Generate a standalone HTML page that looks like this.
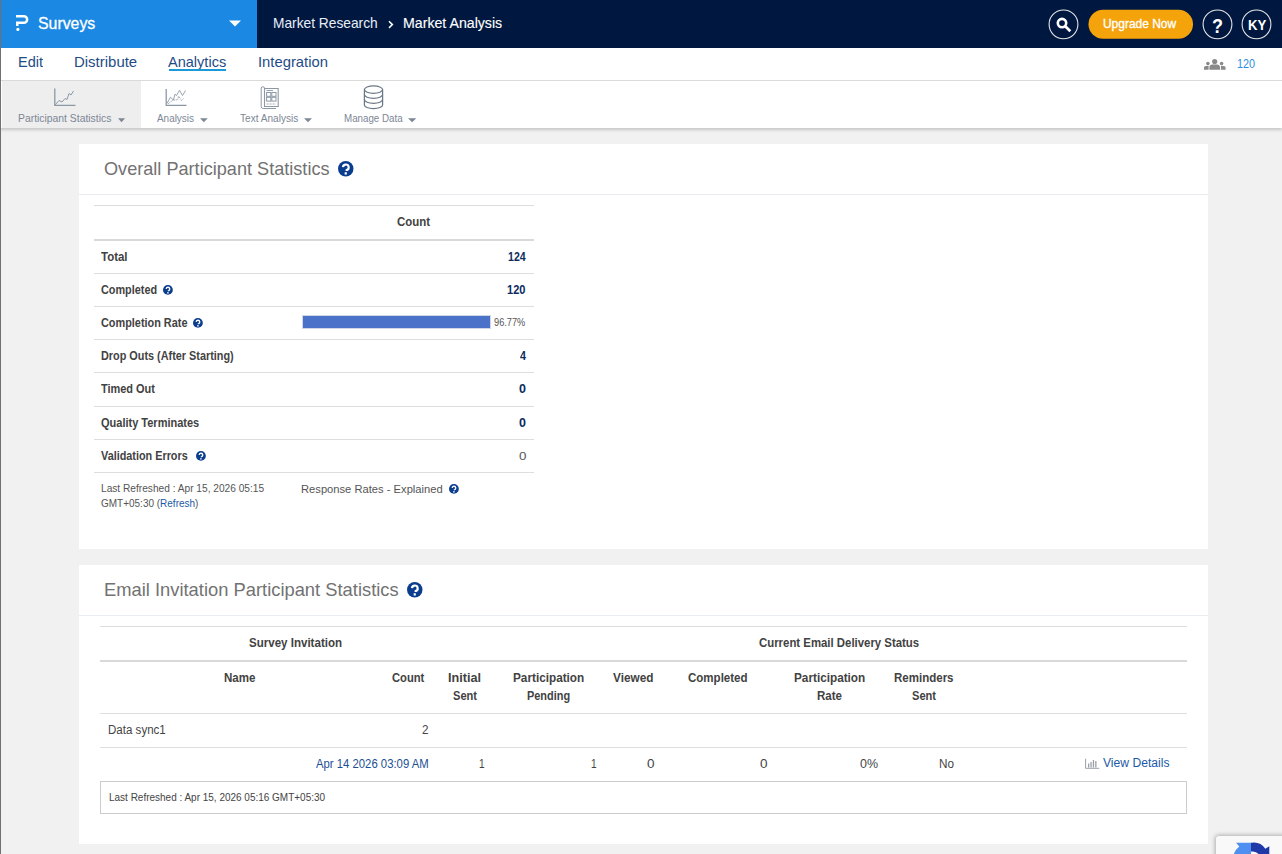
<!DOCTYPE html><html><head><meta charset="utf-8"><style>
html,body{margin:0;padding:0;width:1282px;height:854px;overflow:hidden;font-family:"Liberation Sans",sans-serif}
.t{position:absolute;white-space:nowrap;transform-origin:0 0}
</style></head><body>
<div style="position:absolute;left:0px;top:0px;width:1282px;height:854px;background:#f1f1f1"></div>
<div style="position:absolute;left:0px;top:0px;width:1282px;height:48px;background:#001840"></div>
<div style="position:absolute;left:0px;top:0px;width:257px;height:48px;background:#1b88e3"></div>
<svg style="position:absolute;left:0;top:0" width="40" height="40" viewBox="0 0 40 40">
<path d="M16 16.25 H23.85 A3.3 3.3 0 0 1 23.85 22.85 H17.25 V26.1" fill="none" stroke="#fff" stroke-width="2.5"/>
<circle cx="17.9" cy="29.4" r="1.6" fill="#fff"/></svg>
<div class="t" id="t0" style="left:38.20px;top:15.85px;font-size:16px;line-height:16px;color:#fff;transform:scaleX(0.9908);-webkit-text-stroke:0.3px #fff;">Surveys</div>
<svg style="position:absolute;left:229px;top:20px" width="13" height="7"><path d="M0 0.5 H12 L6 6.5Z" fill="#fff"/></svg>
<div class="t" id="t1" style="left:272.77px;top:16.43px;font-size:14.5px;line-height:14.5px;color:#e8eef8;transform:scaleX(0.9481);">Market Research</div>
<svg style="position:absolute;left:386px;top:17px" width="10" height="14"><path d="M3 4.3 L6.4 7.6 L3 10.9" fill="none" stroke="#fff" stroke-width="1.5"/></svg>
<div class="t" id="t2" style="left:403.27px;top:16.43px;font-size:14.5px;line-height:14.5px;color:#ffffff;transform:scaleX(0.9766);-webkit-text-stroke:0.12px #fff;">Market Analysis</div>
<svg style="position:absolute;left:1040px;top:0" width="240" height="48">
<circle cx="23.5" cy="24.35" r="14.4" fill="none" stroke="#e6e6e6" stroke-width="1.1"/>
<circle cx="22" cy="23.1" r="4.2" fill="none" stroke="#fff" stroke-width="2.6"/>
<path d="M25.5 26.6 L30.3 31.3" stroke="#fff" stroke-width="2.8" stroke-linecap="butt"/>
<rect x="48.5" y="9.8" width="104.5" height="29" rx="14.5" fill="#f4a30b"/>
<circle cx="177.5" cy="24.35" r="14.4" fill="none" stroke="#e6e6e6" stroke-width="1.1"/>
<circle cx="216.5" cy="24.35" r="14.4" fill="none" stroke="#e6e6e6" stroke-width="1.1"/>
</svg>
<div class="t" id="t3" style="left:1103.35px;top:17.20px;font-size:13px;line-height:13px;color:#fff;transform:scaleX(0.9186);-webkit-text-stroke:0.35px #fff;">Upgrade Now</div>
<div class="t" id="t4" style="left:1211.65px;top:15.20px;font-size:21px;line-height:21px;color:#fff;font-weight:bold;transform:scaleX(0.8559);">?</div>
<div class="t" id="t5" style="left:1247.50px;top:18.35px;font-size:14px;line-height:14px;color:#fff;font-weight:bold;transform:scaleX(0.9418);">KY</div>
<div style="position:absolute;left:0px;top:48px;width:1282px;height:33px;background:#fff;border-bottom:1px solid #dcdcdc;box-sizing:border-box"></div>
<div class="t" id="t6" style="left:17.97px;top:54.92px;font-size:14.5px;line-height:14.5px;color:#1f4c86;transform:scaleX(0.9990);">Edit</div>
<div class="t" id="t7" style="left:74.28px;top:54.92px;font-size:14.5px;line-height:14.5px;color:#1f4c86;transform:scaleX(1.0314);">Distribute</div>
<div class="t" id="t8" style="left:168.28px;top:54.92px;font-size:14.5px;line-height:14.5px;color:#1f4c86;transform:scaleX(1.0025);">Analytics</div>
<div style="position:absolute;left:169px;top:69px;width:57px;height:2px;background:#1c9ad8"></div>
<div class="t" id="t9" style="left:257.97px;top:54.92px;font-size:14.5px;line-height:14.5px;color:#1f4c86;transform:scaleX(1.0211);">Integration</div>
<svg style="position:absolute;left:1200px;top:55px" width="30" height="18" viewBox="1200 55 30 18" fill="#8a8a8a">
<circle cx="1214.7" cy="61.6" r="2.6"/>
<path d="M1209.4 69.8 V67.4 A3 3 0 0 1 1212.4 64.6 H1217 A3 3 0 0 1 1220 67.4 V69.8Z"/>
<circle cx="1207.9" cy="63.6" r="1.8"/>
<circle cx="1221.6" cy="63.6" r="1.8"/>
<path d="M1204 69.8 V67.6 A1.8 1.8 0 0 1 1205.8 65.9 H1208.6 V69.8Z"/>
<path d="M1225.6 69.8 V67.6 A1.8 1.8 0 0 0 1223.8 65.9 H1220.9 V69.8Z"/>
</svg>
<div class="t" id="t10" style="left:1237.35px;top:57.20px;font-size:13px;line-height:13px;color:#2a8ee3;transform:scaleX(0.8312);">120</div>
<div style="position:absolute;left:0px;top:81px;width:1282px;height:47px;background:#fff;box-shadow:0 2px 3px rgba(0,0,0,0.18)"></div>
<div style="position:absolute;left:2px;top:81px;width:139px;height:47px;background:#eeeeee"></div>
<svg style="position:absolute;left:0;top:80px" width="430" height="32" viewBox="0 80 430 32" fill="none" stroke="#8d98a5">
<path d="M54.8 88.5 V105.3 H75.5" stroke-width="1.3"/>
<path d="M55 105 L59 100.5 L62 102 L65 98.5 L67 99.5 L69 93.5 L71 95 L73.5 91" stroke-width="1"/>
<path d="M166.2 88.9 V105.3 H186.5" stroke-width="1.3"/>
<path d="M167 103.5 L170.4 97.2 L173.4 100 L175 94.2 L176.5 95.5 L179.5 90.2 L182.5 95.5 L185.5 90.5" stroke-width="0.9"/>
<path d="M168 103.8 L173 100 L177.7 99.8 L178.5 96 L181.5 100.5 L184 98" stroke-width="0.8" stroke-dasharray="1.2 0.6"/>
<path d="M264.5 88.5 H278.2 V106.5 H264.5 Z" stroke-width="1.1"/>
<path d="M264.5 106 V88 A1.7 1.7 0 0 0 261.2 88 V106.5 A2 2 0 0 0 263.2 108.5 H276" stroke-width="1"/>
<path d="M266.5 90.5 H273" stroke-width="0.9"/>
<rect x="266.6" y="92.5" width="4.2" height="3.8" stroke-width="1"/>
<rect x="271.8" y="92.5" width="4.2" height="3.8" stroke-width="1"/>
<rect x="266.6" y="97.3" width="4.2" height="3.8" stroke-width="1"/>
<rect x="271.8" y="97.3" width="4.2" height="3.8" stroke-width="1"/>
<path d="M266.6 104 H276" stroke-width="0.8" stroke-dasharray="2 1"/>
</svg>
<svg style="position:absolute;left:360px;top:82px" width="28" height="30" viewBox="360 82 28 30" fill="none" stroke="#6a7887" stroke-width="1.25">
<ellipse cx="373.5" cy="89.6" rx="9.1" ry="3.7"/>
<path d="M364.4 89.6 V104.9 A9.1 3.7 0 0 0 382.6 104.9 V89.6"/>
<path d="M364.4 94.6 A9.1 3.7 0 0 0 382.6 94.6"/>
<path d="M364.4 99.6 A9.1 3.7 0 0 0 382.6 99.6"/>
</svg>
<div class="t" id="t11" style="left:17.95px;top:112.70px;font-size:11px;line-height:11px;color:#7d8796;transform:scaleX(0.9423);">Participant Statistics</div>
<div class="t" id="t12" style="left:157.05px;top:112.80px;font-size:11px;line-height:11px;color:#7d8796;transform:scaleX(0.9026);">Analysis</div>
<div class="t" id="t13" style="left:240.05px;top:112.80px;font-size:11px;line-height:11px;color:#7d8796;transform:scaleX(0.9162);">Text Analysis</div>
<div class="t" id="t14" style="left:343.85px;top:112.80px;font-size:11px;line-height:11px;color:#7d8796;transform:scaleX(0.8878);">Manage Data</div>
<svg style="position:absolute;left:117.6px;top:118px" width="9" height="5"><path d="M0 0.3 H7.1 L3.55 4.2Z" fill="#7d8796"/></svg>
<svg style="position:absolute;left:200.2px;top:118px" width="9" height="5"><path d="M0 0.3 H7.7 L3.85 4.2Z" fill="#7d8796"/></svg>
<svg style="position:absolute;left:304px;top:118px" width="9" height="5"><path d="M0 0.3 H8.0 L4.00 4.2Z" fill="#7d8796"/></svg>
<svg style="position:absolute;left:407.7px;top:118px" width="9" height="5"><path d="M0 0.3 H8.3 L4.15 4.2Z" fill="#7d8796"/></svg>
<div style="position:absolute;left:79px;top:144px;width:1129px;height:405px;background:#fff"></div>
<div style="position:absolute;left:79px;top:194px;width:1129px;height:1px;background:#e9ecf0"></div>
<div class="t" id="t15" style="left:103.67px;top:159.62px;font-size:18.5px;line-height:18.5px;color:#727272;transform:scaleX(0.9793);">Overall Participant Statistics</div>
<svg style="position:absolute;left:337.10px;top:159.55px" width="17.50" height="17.50" viewBox="-8.75 -8.75 17.5 17.5"><circle r="7.75" fill="#0b3d8f"/><path d="M-2.79 -1.55 A2.87 2.87 0 1 1 0.93 1.40 V2.32" fill="none" stroke="#fff" stroke-width="2.17"/><rect x="-1.09" y="3.49" width="2.17" height="2.32" fill="#fff"/></svg>
<div style="position:absolute;left:94px;top:205px;width:440px;height:1px;background:#dddddd"></div>
<div style="position:absolute;left:94px;top:239px;width:440px;height:2px;background:#d9d9d9"></div>
<div style="position:absolute;left:94px;top:273px;width:440px;height:1px;background:#dedede"></div>
<div style="position:absolute;left:94px;top:306px;width:440px;height:1px;background:#dedede"></div>
<div style="position:absolute;left:94px;top:339px;width:440px;height:1px;background:#dedede"></div>
<div style="position:absolute;left:94px;top:372px;width:440px;height:1px;background:#dedede"></div>
<div style="position:absolute;left:94px;top:406px;width:440px;height:1px;background:#dedede"></div>
<div style="position:absolute;left:94px;top:439px;width:440px;height:1px;background:#dedede"></div>
<div style="position:absolute;left:94px;top:472px;width:440px;height:1px;background:#dedede"></div>
<div class="t" id="t16" style="left:397.15px;top:215.20px;font-size:13px;line-height:13px;color:#424242;font-weight:bold;transform:scaleX(0.8803);">Count</div>
<div class="t" id="t17" style="left:101.35px;top:250.20px;font-size:13px;line-height:13px;color:#424242;font-weight:bold;transform:scaleX(0.8824);">Total</div>
<div class="t" id="t18" style="left:508.15px;top:250.20px;font-size:13px;line-height:13px;color:#0b2b5e;font-weight:bold;transform:scaleX(0.8128);">124</div>
<div class="t" id="t19" style="left:101.35px;top:283.40px;font-size:13px;line-height:13px;color:#424242;font-weight:bold;transform:scaleX(0.8343);">Completed</div>
<svg style="position:absolute;left:161.90px;top:284.10px" width="11.80" height="11.80" viewBox="-5.9 -5.9 11.8 11.8"><circle r="4.9" fill="#0b3d8f"/><path d="M-1.76 -0.98 A1.81 1.81 0 1 1 0.59 0.88 V1.47" fill="none" stroke="#fff" stroke-width="1.37"/><rect x="-0.69" y="2.21" width="1.37" height="1.47" fill="#fff"/></svg>
<div class="t" id="t20" style="left:507.35px;top:283.40px;font-size:13px;line-height:13px;color:#0b2b5e;font-weight:bold;transform:scaleX(0.8496);">120</div>
<div class="t" id="t21" style="left:101.35px;top:316.40px;font-size:13px;line-height:13px;color:#424242;font-weight:bold;transform:scaleX(0.8369);">Completion Rate</div>
<svg style="position:absolute;left:191.50px;top:317.10px" width="11.80" height="11.80" viewBox="-5.9 -5.9 11.8 11.8"><circle r="4.9" fill="#0b3d8f"/><path d="M-1.76 -0.98 A1.81 1.81 0 1 1 0.59 0.88 V1.47" fill="none" stroke="#fff" stroke-width="1.37"/><rect x="-0.69" y="2.21" width="1.37" height="1.47" fill="#fff"/></svg>
<div style="position:absolute;left:302px;top:315px;width:189px;height:14px;background:#4a72c9;border:1px solid #cfd6e6;box-sizing:border-box"></div>
<div class="t" id="t22" style="left:493.98px;top:316.93px;font-size:10.5px;line-height:10.5px;color:#555555;transform:scaleX(0.8793);">96.77%</div>
<div class="t" id="t23" style="left:101.35px;top:349.10px;font-size:13px;line-height:13px;color:#424242;font-weight:bold;transform:scaleX(0.8349);">Drop Outs (After Starting)</div>
<div class="t" id="t24" style="left:519.85px;top:349.10px;font-size:13px;line-height:13px;color:#0b2b5e;font-weight:bold;transform:scaleX(0.8211);">4</div>
<div class="t" id="t25" style="left:101.35px;top:382.00px;font-size:13px;line-height:13px;color:#424242;font-weight:bold;transform:scaleX(0.8424);">Timed Out</div>
<div class="t" id="t26" style="left:518.85px;top:382.00px;font-size:13px;line-height:13px;color:#0b2b5e;font-weight:bold;transform:scaleX(0.9593);">0</div>
<div class="t" id="t27" style="left:101.35px;top:415.90px;font-size:13px;line-height:13px;color:#424242;font-weight:bold;transform:scaleX(0.8463);">Quality Terminates</div>
<div class="t" id="t28" style="left:518.85px;top:415.90px;font-size:13px;line-height:13px;color:#0b2b5e;font-weight:bold;transform:scaleX(0.9593);">0</div>
<div class="t" id="t29" style="left:101.35px;top:449.30px;font-size:13px;line-height:13px;color:#424242;font-weight:bold;transform:scaleX(0.8338);">Validation Errors</div>
<svg style="position:absolute;left:194.60px;top:450.10px" width="11.80" height="11.80" viewBox="-5.9 -5.9 11.8 11.8"><circle r="4.9" fill="#0b3d8f"/><path d="M-1.76 -0.98 A1.81 1.81 0 1 1 0.59 0.88 V1.47" fill="none" stroke="#fff" stroke-width="1.37"/><rect x="-0.69" y="2.21" width="1.37" height="1.47" fill="#fff"/></svg>
<div class="t" id="t30" style="left:518.62px;top:450.58px;font-size:11.5px;line-height:11.5px;color:#555555;transform:scaleX(1.1611);">0</div>
<div class="t" id="t31" style="left:101.42px;top:482.98px;font-size:11.5px;line-height:11.5px;color:#555555;transform:scaleX(0.8826);">Last Refreshed : Apr 15, 2026 05:15</div>
<div class="t" id="t32" style="left:101.42px;top:497.78px;font-size:11.5px;line-height:11.5px;color:#555555;transform:scaleX(0.8681);">GMT+05:30 (<span style="color:#1b5aa6">Refresh</span>)</div>
<div class="t" id="t33" style="left:301.43px;top:483.88px;font-size:11.5px;line-height:11.5px;color:#555555;transform:scaleX(0.9721);">Response Rates - Explained</div>
<svg style="position:absolute;left:448.30px;top:483.10px" width="11.80" height="11.80" viewBox="-5.9 -5.9 11.8 11.8"><circle r="4.9" fill="#0b3d8f"/><path d="M-1.76 -0.98 A1.81 1.81 0 1 1 0.59 0.88 V1.47" fill="none" stroke="#fff" stroke-width="1.37"/><rect x="-0.69" y="2.21" width="1.37" height="1.47" fill="#fff"/></svg>
<div style="position:absolute;left:79px;top:565px;width:1129px;height:279px;background:#fff"></div>
<div style="position:absolute;left:79px;top:615px;width:1129px;height:1px;background:#e9ecf0"></div>
<div class="t" id="t34" style="left:103.58px;top:580.82px;font-size:18.5px;line-height:18.5px;color:#727272;transform:scaleX(0.9916);">Email Invitation Participant Statistics</div>
<svg style="position:absolute;left:406.25px;top:581.25px" width="17.50" height="17.50" viewBox="-8.75 -8.75 17.5 17.5"><circle r="7.75" fill="#0b3d8f"/><path d="M-2.79 -1.55 A2.87 2.87 0 1 1 0.93 1.40 V2.32" fill="none" stroke="#fff" stroke-width="2.17"/><rect x="-1.09" y="3.49" width="2.17" height="2.32" fill="#fff"/></svg>
<div style="position:absolute;left:100px;top:626px;width:1087px;height:1px;background:#dddddd"></div>
<div style="position:absolute;left:100px;top:660px;width:1087px;height:2px;background:#d9d9d9"></div>
<div style="position:absolute;left:100px;top:713px;width:1087px;height:1px;background:#dedede"></div>
<div style="position:absolute;left:100px;top:747px;width:1087px;height:1px;background:#dedede"></div>
<div style="position:absolute;left:100px;top:781px;width:1087px;height:33px;border:1px solid #cccccc;box-sizing:border-box"></div>
<div class="t" id="t35" style="left:249.35px;top:636.00px;font-size:13px;line-height:13px;color:#424242;font-weight:bold;transform:scaleX(0.8882);">Survey Invitation</div>
<div class="t" id="t36" style="left:759.25px;top:636.00px;font-size:13px;line-height:13px;color:#424242;font-weight:bold;transform:scaleX(0.8760);">Current Email Delivery Status</div>
<div class="t" id="t37" style="left:224.35px;top:670.90px;font-size:13px;line-height:13px;color:#424242;font-weight:bold;transform:scaleX(0.8876);">Name</div>
<div class="t" id="t38" style="left:391.95px;top:670.90px;font-size:13px;line-height:13px;color:#424242;font-weight:bold;transform:scaleX(0.8617);">Count</div>
<div class="t" id="t39" style="left:448.15px;top:670.90px;font-size:13px;line-height:13px;color:#424242;font-weight:bold;transform:scaleX(0.9706);">Initial</div>
<div class="t" id="t40" style="left:452.55px;top:689.00px;font-size:13px;line-height:13px;color:#424242;font-weight:bold;transform:scaleX(0.8533);">Sent</div>
<div class="t" id="t41" style="left:512.75px;top:670.90px;font-size:13px;line-height:13px;color:#424242;font-weight:bold;transform:scaleX(0.9048);">Participation</div>
<div class="t" id="t42" style="left:526.85px;top:689.00px;font-size:13px;line-height:13px;color:#424242;font-weight:bold;transform:scaleX(0.8395);">Pending</div>
<div class="t" id="t43" style="left:612.95px;top:670.90px;font-size:13px;line-height:13px;color:#424242;font-weight:bold;transform:scaleX(0.9075);">Viewed</div>
<div class="t" id="t44" style="left:688.25px;top:670.90px;font-size:13px;line-height:13px;color:#424242;font-weight:bold;transform:scaleX(0.8864);">Completed</div>
<div class="t" id="t45" style="left:794.35px;top:670.90px;font-size:13px;line-height:13px;color:#424242;font-weight:bold;transform:scaleX(0.9048);">Participation</div>
<div class="t" id="t46" style="left:817.35px;top:689.00px;font-size:13px;line-height:13px;color:#424242;font-weight:bold;transform:scaleX(0.8883);">Rate</div>
<div class="t" id="t47" style="left:894.15px;top:670.90px;font-size:13px;line-height:13px;color:#424242;font-weight:bold;transform:scaleX(0.8860);">Reminders</div>
<div class="t" id="t48" style="left:911.85px;top:689.00px;font-size:13px;line-height:13px;color:#424242;font-weight:bold;transform:scaleX(0.8533);">Sent</div>
<div class="t" id="t49" style="left:108.08px;top:723.62px;font-size:12.5px;line-height:12.5px;color:#444444;transform:scaleX(0.9243);">Data sync1</div>
<div class="t" id="t50" style="left:421.88px;top:723.62px;font-size:12.5px;line-height:12.5px;color:#444444;transform:scaleX(0.9348);">2</div>
<div class="t" id="t51" style="left:316.18px;top:757.62px;font-size:12.5px;line-height:12.5px;color:#1b4f94;transform:scaleX(0.9060);">Apr 14 2026 03:09 AM</div>
<div class="t" id="t52" style="left:478.98px;top:757.62px;font-size:12.5px;line-height:12.5px;color:#444444;transform:scaleX(0.8054);">1</div>
<div class="t" id="t53" style="left:590.77px;top:757.62px;font-size:12.5px;line-height:12.5px;color:#444444;transform:scaleX(0.8054);">1</div>
<div class="t" id="t54" style="left:646.88px;top:757.62px;font-size:12.5px;line-height:12.5px;color:#444444;transform:scaleX(1.0787);">0</div>
<div class="t" id="t55" style="left:759.88px;top:757.62px;font-size:12.5px;line-height:12.5px;color:#444444;transform:scaleX(1.0787);">0</div>
<div class="t" id="t56" style="left:860.38px;top:757.62px;font-size:12.5px;line-height:12.5px;color:#444444;transform:scaleX(0.9965);">0%</div>
<div class="t" id="t57" style="left:939.38px;top:757.62px;font-size:12.5px;line-height:12.5px;color:#444444;transform:scaleX(0.9384);">No</div>
<svg style="position:absolute;left:1084px;top:757px" width="17" height="13" viewBox="1084 757 17 13">
<path d="M1085.6 758.7 V768.3 H1099.3" fill="none" stroke="#9aa0a8" stroke-width="1"/>
<rect x="1088" y="763.5" width="1.3" height="4" fill="#9aa0a8"/>
<rect x="1090.4" y="762" width="1.3" height="5.5" fill="#9aa0a8"/>
<rect x="1092.8" y="760" width="1.3" height="7.5" fill="#9aa0a8"/>
<rect x="1095.2" y="761" width="1.3" height="6.5" fill="#9aa0a8"/>
</svg>
<div class="t" id="t58" style="left:1103.08px;top:757.42px;font-size:12.5px;line-height:12.5px;color:#1c5aa6;transform:scaleX(0.9697);">View Details</div>
<div class="t" id="t59" style="left:108.55px;top:791.90px;font-size:11px;line-height:11px;color:#444444;transform:scaleX(0.9072);">Last Refreshed : Apr 15, 2026 05:16 GMT+05:30</div>
<div style="position:absolute;left:1216px;top:836px;width:80px;height:60px;background:#f9f9f9;box-shadow:0 0 4px 1px rgba(0,0,0,0.28);border-radius:3px"></div>
<svg style="position:absolute;left:1216px;top:836px" width="66" height="18" viewBox="1216 836 66 18">
<path d="M1236 842.8 H1251 V854 H1233.8 Q1235.8 849.2 1239.3 846.6 Z" fill="#4f8ff2"/>
<path d="M1251 842.8 A14 14 0 0 1 1265.3 848.8 L1269.3 846.2 V854 H1258.6 A8 8 0 0 0 1251 851.6 Z" fill="#1f3aa8"/>
</svg>
<div style="position:absolute;left:0px;top:0px;width:1px;height:854px;background:#707070"></div>
</body></html>
